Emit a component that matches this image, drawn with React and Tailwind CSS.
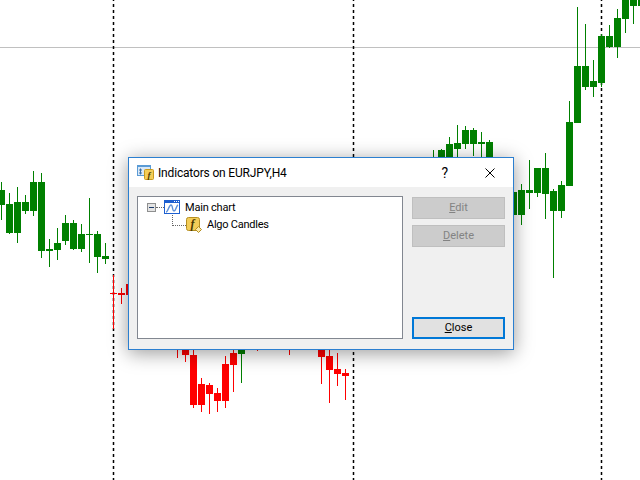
const green = '#008000';
const red = '#ff0000';

// x center, body top, body bottom, wick top, wick bottom
const greenCandles = [
  [1, 190, 205, 182, 220], [9, 204, 233, 193, 234], [17, 202, 233, 187, 243], [25, 202, 211, 195, 214],
  [33, 182, 211, 171, 216], [41, 182, 251, 173, 258], [49, 249, 251, 239, 267], [57, 243, 250, 228, 260],
  [65, 223, 241, 215, 245], [73, 223, 249, 220, 250], [81, 234, 249, 224, 252], [89, 234, 235, 198, 263],
  [97, 234, 257, 231, 273], [105, 256, 259, 243, 264],
  [241, 340, 354, 340, 383],
  [433, 157, 170, 150, 170], [441, 150, 170, 149, 170], [449, 144, 170, 137, 170], [457, 143, 149, 125, 170],
  [465, 130, 144, 126, 149], [473, 130, 144, 128, 156], [481, 142, 144, 132, 170], [489, 142, 170, 140, 170],
  [513, 192, 215, 185, 220], [521, 190, 215, 184, 225], [529, 190, 193, 160, 209], [537, 168, 193, 168, 197],
  [545, 168, 194, 153, 219], [553, 191, 211, 189, 278], [561, 185, 211, 181, 218], [569, 122, 186, 101, 186],
  [577, 66, 123, 7, 123], [585, 66, 87, 24, 90], [593, 81, 87, 60, 97], [601, 36, 83, 34, 87],
  [609, 36, 47, 25, 48], [617, 18, 47, 9, 58], [625, 0, 19, 0, 33], [633, 0, 6, 0, 24], [641, 0, 6, 0, 6],
];

const redCandles = [
  [113, 293, 294, 275, 329], [121, 293, 295, 288, 304], [129, 284, 295, 284, 295],
  [177, 340, 345, 340, 358], [185, 340, 355, 340, 362], [193, 355, 405, 340, 408], [201, 384, 405, 378, 412],
  [209, 385, 394, 383, 414], [217, 393, 401, 388, 412], [225, 364, 401, 356, 408], [233, 353, 365, 340, 392],
  [257, 340, 341, 340, 351], [289, 340, 341, 340, 355], [321, 340, 357, 340, 384], [329, 356, 370, 340, 403],
  [337, 369, 374, 353, 386], [345, 373, 376, 369, 400],
];

const Candles = ({ items, color }) =>
  items.map(([x, top, bottom, wickTop, wickBottom]) => (
    <g key={x} fill={color} shapeRendering="crispEdges">
      <rect x={x} y={wickTop} width="1" height={wickBottom - wickTop} />
      <rect x={x - 3} y={top} width="7" height={Math.max(bottom - top, 1)} />
    </g>
  ));

const Chart = () => (
  <svg className="absolute inset-0" width="640" height="480">
    <rect x="0" y="47" width="640" height="1" fill="#c0c0c0" />
    {[113, 353, 601].map((x) => (
      <line key={x} x1={x + 0.5} y1="0" x2={x + 0.5} y2="480" stroke="#000" strokeWidth="1.5" strokeDasharray="3 3" strokeDashoffset="2" />
    ))}
    <Candles items={greenCandles} color={green} />
    <Candles items={redCandles} color={red} />
  </svg>
);

const AlgoIcon = () => (
  <svg width="16" height="16" viewBox="0 0 16 16">
    <rect x="0.5" y="0.5" width="13" height="13" rx="2" fill="#f3cd58" stroke="#b58f22" />
    <text x="6.5" y="11" textAnchor="middle" fontFamily="'Liberation Serif', serif" fontStyle="italic" fontWeight="700" fontSize="12" fill="#4a3500">f</text>
    <path d="M12.5 9.5 L15.5 12.5 L12.5 15.5 L9.5 12.5 Z" fill="#fbe9a6" stroke="#b58f22" />
  </svg>
);

const ChartIcon = () => (
  <svg width="16" height="14" viewBox="0 0 16 14">
    <rect x="0.5" y="0.5" width="15" height="13" fill="#fff" stroke="#1d5fd0" />
    <rect x="0" y="0" width="16" height="3" fill="#1d5fd0" />
    <rect x="10" y="1" width="1" height="1" fill="#fff" />
    <rect x="12" y="1" width="1" height="1" fill="#fff" />
    <rect x="14" y="1" width="1" height="1" fill="#fff" />
    <path d="M2 12 C4 12 5 5 7 5 C9 5 8 11 10 11 C12 11 12 6 14 5" fill="none" stroke="#5b8fd8" strokeWidth="1.4" />
  </svg>
);

const TitleIcon = () => (
  <svg width="17" height="16" viewBox="0 0 17 16">
    <rect x="0.5" y="0.5" width="13" height="10" fill="#d9e8f7" stroke="#5a9bd5" />
    <rect x="0" y="0" width="14" height="2" fill="#5a9bd5" />
    <path d="M3.5 3.5 V9.5 M2 5 H5 M2 8 H5" stroke="#3a6ea5" fill="none" />
    <rect x="7.5" y="4.5" width="9" height="10" rx="1" fill="#f3cd58" stroke="#c99a1c" />
    <text x="12" y="12.5" textAnchor="middle" fontFamily="'Liberation Serif', serif" fontStyle="italic" fontWeight="700" fontSize="9" fill="#4a3500">f</text>
  </svg>
);

const Button = ({ hot, rest, disabled, focused }) => (
  <button
    className={
      focused
        ? 'h-[22px] w-[93px] border-2 border-[#0078d7] bg-[#e1e1e1] pt-px text-[11px] text-black'
        : 'h-[22px] w-[93px] border border-[#bfbfbf] bg-[#cccccc] text-[11px] text-[#838383]'
    }
    disabled={disabled}
  >
    <span className="underline">{hot}</span>
    {rest}
  </button>
);

const Dialog = () => (
  <div className="absolute left-[128px] top-[157px] flex h-[193px] w-[386px] flex-col border border-[#2b7fd0] bg-[#f0f0f0] shadow-[0_3px_18px_rgba(0,0,0,0.4)]">
    <div className="flex h-[29px] items-center bg-white pl-2">
      <TitleIcon />
      <span className="ml-1 text-xs tracking-[-0.17px] text-black">Indicators on EURJPY,H4</span>
      <span className="ml-auto mr-[37px] text-sm text-black">?</span>
      <svg className="mr-[18px]" width="10" height="10" viewBox="0 0 10 10">
        <path d="M0.5 0.5 L9.5 9.5 M9.5 0.5 L0.5 9.5" stroke="#000" fill="none" />
      </svg>
    </div>
    <div className="flex flex-1 gap-[9px] pb-[10px] pl-2 pt-[9px]">
      <div className="relative h-[143px] w-[266px] border border-[#828790] bg-white">
        <div className="flex h-[18px] items-center pl-[9px] pt-[2px]">
          <span className="flex h-[9px] w-[9px] items-center justify-center border border-[#8e8f8f] bg-[#e4e4e4]">
            <span className="h-px w-[5px] bg-[#1a3a6a]" />
          </span>
          <span className="w-[8px] border-t border-dotted border-[#666]" />
          <ChartIcon />
          <span className="ml-[5px] translate-y-px text-[11px] tracking-[-0.2px] text-black">Main chart</span>
        </div>
        <div className="flex items-center pl-[34px] pt-[2px]">
          <span className="h-[11px] w-[14px] -translate-y-[5px] border-b border-l border-dotted border-[#666]" />
          <AlgoIcon />
          <span className="ml-[5px] text-[11px] tracking-[-0.25px] text-black">Algo Candles</span>
        </div>
      </div>
      <div className="flex flex-col">
        <div className="mt-px flex flex-col gap-[6px]">
          <Button hot="E" rest="dit" disabled />
          <Button hot="D" rest="elete" disabled />
        </div>
        <div className="mt-auto">
          <Button hot="C" rest="lose" focused />
        </div>
      </div>
    </div>
  </div>
);

const App = () => (
  <div className="relative h-[480px] w-[640px] overflow-hidden bg-white font-['Roboto','Noto_Sans',sans-serif]">
    <Chart />
    <Dialog />
  </div>
);

export default App;
